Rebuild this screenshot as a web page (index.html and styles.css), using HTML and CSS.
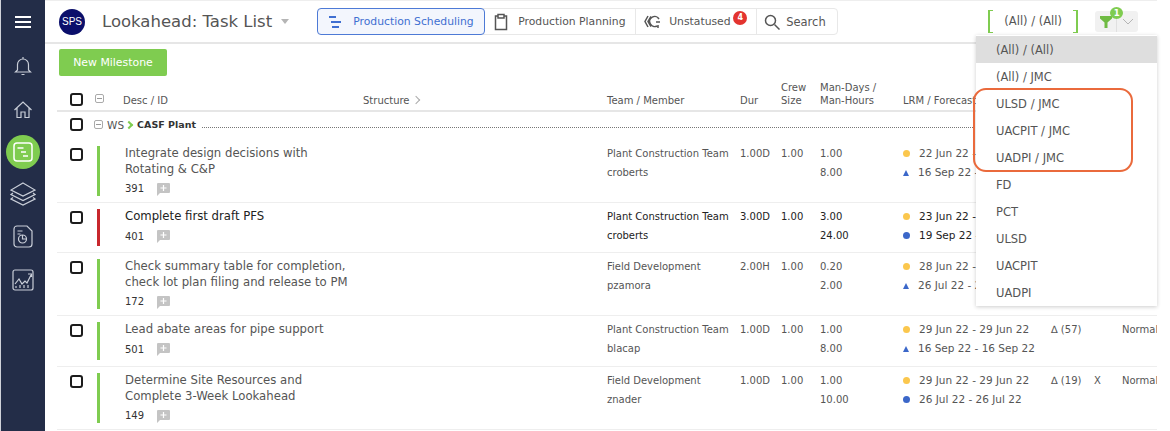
FILE: index.html
```html
<!DOCTYPE html>
<html lang="en">
<head>
    <meta charset="UTF-8">
    <title>Lookahead: Task List</title>
    <link rel="stylesheet" href="styles.css">
</head>
<body>
    <aside class="sidebar">
        <svg class="nav-icon menu" width="18" height="14" viewBox="0 0 18 14"><path d="M1 2h16M1 7h16M1 12h16" /></svg>
        <svg class="nav-icon bell" width="18" height="20" viewBox="0 0 18 20"><path d="M9 1v2M3.500 14V8.500a5.500 5.500 0 0 1 11 0V14l2 2h-15zM7.500 18.500h3" /></svg>
        <svg class="nav-icon home" width="20" height="20" viewBox="0 0 20 20"><path d="M1.500 10 10 2l8.500 8M4 8v9.500h4V12h4v5.500h4V8" /></svg>
        <div class="nav-active">
            <svg width="22" height="22" viewBox="0 0 22 22"><rect x="2" y="2" width="18" height="18" rx="3" /><path d="M5.500 7h6M9 11h5M11 15h5" /></svg>
        </div>
        <svg class="nav-icon layers" width="26" height="26" viewBox="0 0 26 26"><path d="M13 2 25 9l-12 6L1 9zM3 12l-2 1.500 12 6 12-6-2-1.500M3 16.500 1 18l12 6 12-6-2-1.500" /></svg>
        <svg class="nav-icon report" width="22" height="24" viewBox="0 0 22 24"><path d="M2 5a3 3 0 0 1 3-3h10l5 5v13a3 3 0 0 1-3 3H5a3 3 0 0 1-3-3zM5.500 7h5M5.500 10h3" /><circle cx="10.500" cy="15" r="4" /><path d="M10.500 11v4h4" /></svg>
        <svg class="nav-icon chart" width="22" height="22" viewBox="0 0 22 22"><rect x="1" y="1" width="20" height="20" rx="2" /><path d="M3 15l4-5 3 5 3-3 2 2 4-8M16 5h3.500v3M4 19v-2M8 19v-3M12 19v-3M16 19v-3" /></svg>
    </aside>

    <main class="content">
        <header class="topbar">
            <div class="logo">SPS</div>
            <h1 class="title">Lookahead: Task List</h1>
            <span class="title-caret"></span>
            <nav class="tabs">
                <a class="tab tab-active">
                    <svg width="16" height="14" viewBox="0 0 16 14"><path d="M1 2h7M3 7h10M4 12h7" /></svg>
                    Production Scheduling
                </a>
                <a class="tab tab-planning">
                    <svg width="14" height="18" viewBox="0 0 14 18"><path d="M4 3H1.500v13.500h11V3H10M4 1.500h6V5H4z" /></svg>
                    Production Planning
                </a>
                <a class="tab tab-unstatused">
                    <svg width="18" height="16" viewBox="0 0 18 16"><path d="M5 2 2 7.500 5 13M8 2.500 5 7.500 8 12.500M16 5a5 5 0 1 0-2 7M13 8h4M15 11v3" /></svg>
                    Unstatused
                    <span class="tab-badge">4</span>
                </a>
                <a class="tab tab-search">
                    <svg width="16" height="16" viewBox="0 0 16 16"><circle cx="6.500" cy="6.500" r="5" /><path d="m10.500 10.500 5 5" /></svg>
                    Search
                </a>
            </nav>
            <div class="scope-select">(All) / (All)</div>
            <div class="filter-btn">
                <span class="filter-main">
                    <svg width="12" height="12" viewBox="0 0 12 12"><path d="M0 0h12v2.500L7.500 6.500V12h-3V6.500L0 2.500z" /></svg>
                    <span class="filter-badge">1</span>
                </span>
                <span class="filter-more">
                    <svg width="12" height="7" viewBox="0 0 12 7"><path d="m1 1 5 5 5-5" /></svg>
                </span>
            </div>
        </header>

        <div class="actions">
            <button class="new-btn">New Milestone</button>
        </div>

        <div class="row head-row">
            <span class="check"></span>
            <span class="collapse"></span>
            <span>Desc / ID</span>
            <span>Structure <i class="chev"></i></span>
            <span>Team / Member</span>
            <span>Dur</span>
            <span>Crew<br>Size</span>
            <span>Man-Days /<br>Man-Hours</span>
            <span>LRM / Forecast</span>
        </div>

        <div class="ws-row">
            <span class="check"></span>
            <span class="collapse"></span>
            <span class="ws-label">WS</span>
            <i class="ws-chev"></i>
            <b class="ws-name">CASF Plant</b>
            <span class="ws-line"></span>
        </div>

        <div class="row task task-first">
            <span class="check"></span>
            <span class="bar"></span>
            <div class="desc">
                <p>Integrate design decisions with<br>Rotating &amp; C&amp;P</p>
                <div class="task-id">391 <svg class="note" width="13" height="13" viewBox="0 0 13 13"><path d="M0 1a1 1 0 0 1 1-1h11a1 1 0 0 1 1 1v8a1 1 0 0 1-1 1H3l-3 3z" /><path class="plus" d="M3.500 5h6M6.500 2v6" /></svg></div>
            </div>
            <span></span>
            <span class="cell-text">Plant Construction Team<br>croberts</span>
            <span>1.00D</span>
            <span>1.00</span>
            <span>1.00<br>8.00</span>
            <div class="dates">
                <div><i class="dot"></i>22 Jun 22 - 22 Jun 22</div>
                <div><i class="tri"></i>16 Sep 22 - 16 Sep 22</div>
            </div>
        </div>

        <div class="row task task-short task-dark">
            <span class="check"></span>
            <span class="bar bar-red"></span>
            <div class="desc">
                <p>Complete first draft PFS</p>
                <div class="task-id">401 <svg class="note" width="13" height="13" viewBox="0 0 13 13"><path d="M0 1a1 1 0 0 1 1-1h11a1 1 0 0 1 1 1v8a1 1 0 0 1-1 1H3l-3 3z" /><path class="plus" d="M3.500 5h6M6.500 2v6" /></svg></div>
            </div>
            <span></span>
            <span class="cell-text">Plant Construction Team<br>croberts</span>
            <span>3.00D</span>
            <span>1.00</span>
            <span>3.00<br>24.00</span>
            <div class="dates">
                <div><i class="dot"></i>23 Jun 22 - 23 Jun 22</div>
                <div><i class="blue-dot"></i>19 Sep 22 - 19 Sep 22</div>
            </div>
        </div>

        <div class="row task">
            <span class="check"></span>
            <span class="bar"></span>
            <div class="desc">
                <p>Check summary table for completion,<br>check lot plan filing and release to PM</p>
                <div class="task-id">172 <svg class="note" width="13" height="13" viewBox="0 0 13 13"><path d="M0 1a1 1 0 0 1 1-1h11a1 1 0 0 1 1 1v8a1 1 0 0 1-1 1H3l-3 3z" /><path class="plus" d="M3.500 5h6M6.500 2v6" /></svg></div>
            </div>
            <span></span>
            <span class="cell-text">Field Development<br>pzamora</span>
            <span>2.00H</span>
            <span>1.00</span>
            <span>0.20<br>2.00</span>
            <div class="dates">
                <div><i class="dot"></i>28 Jun 22 - 28 Jun 22</div>
                <div><i class="tri"></i>26 Jul 22 - 26 Jul 22</div>
            </div>
        </div>

        <div class="row task task-short task-plain">
            <span class="check"></span>
            <span class="bar"></span>
            <div class="desc">
                <p>Lead abate areas for pipe support</p>
                <div class="task-id">501 <svg class="note" width="13" height="13" viewBox="0 0 13 13"><path d="M0 1a1 1 0 0 1 1-1h11a1 1 0 0 1 1 1v8a1 1 0 0 1-1 1H3l-3 3z" /><path class="plus" d="M3.500 5h6M6.500 2v6" /></svg></div>
            </div>
            <span></span>
            <span class="cell-text">Plant Construction Team<br>blacap</span>
            <span>1.00D</span>
            <span>1.00</span>
            <span>1.00<br>8.00</span>
            <div class="dates">
                <div><i class="dot"></i>29 Jun 22 - 29 Jun 22</div>
                <div><i class="tri"></i>16 Sep 22 - 16 Sep 22</div>
            </div>
            <span>&#8710; (57)</span>
            <span></span>
            <span class="clip">Normal</span>
        </div>

        <div class="row task">
            <span class="check"></span>
            <span class="bar"></span>
            <div class="desc">
                <p>Determine Site Resources and<br>Complete 3-Week Lookahead</p>
                <div class="task-id">149 <svg class="note" width="13" height="13" viewBox="0 0 13 13"><path d="M0 1a1 1 0 0 1 1-1h11a1 1 0 0 1 1 1v8a1 1 0 0 1-1 1H3l-3 3z" /><path class="plus" d="M3.500 5h6M6.500 2v6" /></svg></div>
            </div>
            <span></span>
            <span class="cell-text">Field Development<br>znader</span>
            <span>1.00D</span>
            <span>1.00</span>
            <span>1.00<br>10.00</span>
            <div class="dates">
                <div><i class="dot"></i>29 Jun 22 - 29 Jun 22</div>
                <div><i class="blue-dot"></i>26 Jul 22 - 26 Jul 22</div>
            </div>
            <span>&#8710; (19)</span>
            <span>X</span>
            <span class="clip">Normal</span>
        </div>

        <ul class="dropdown">
            <li class="selected">(All) / (All)</li>
            <li>(All) / JMC</li>
            <li>ULSD / JMC</li>
            <li>UACPIT / JMC</li>
            <li>UADPI / JMC</li>
            <li>FD</li>
            <li>PCT</li>
            <li>ULSD</li>
            <li>UACPIT</li>
            <li>UADPI</li>
        </ul>
        <div class="callout"></div>
    </main>
</body>
</html>
```

FILE: styles.css
```css
* {
    box-sizing: border-box;
}

body {
    margin: 0;
    height: 431px;
    overflow: hidden;
    display: flex;
    background: #ffffff;
    font-family: "DejaVu Sans", Verdana, sans-serif;
    font-size: 10.5px;
    color: #555;
}

/* left nav */
.sidebar {
    width: 45px;
    height: 431px;
    flex: none;
    display: flex;
    flex-direction: column;
    align-items: center;
    background: #232d48;
    border-left: 1px solid #cfd2d9;
    padding-top: 15px;
}

.sidebar svg {
    fill: none;
    stroke: #c9ced8;
    stroke-width: 1.2;
}

.nav-icon.menu {
    stroke: #ffffff;
    stroke-width: 1.8;
}

.nav-icon.bell {
    margin-top: 27px;
}

.nav-icon.home {
    margin-top: 24px;
}

.nav-active {
    width: 34px;
    height: 34px;
    margin-top: 15px;
    border-radius: 50%;
    background: #7fcc50;
    display: flex;
    align-items: center;
    justify-content: center;
}

.nav-active svg {
    stroke: #ffffff;
    stroke-width: 1.5;
}

.nav-icon.layers {
    margin-top: 12px;
}

.nav-icon.report {
    margin-top: 17px;
}

.nav-icon.chart {
    margin-top: 21px;
}

/* main column */
.content {
    width: 1112px;
    flex: none;
    position: relative;
}

.topbar {
    height: 44px;
    display: flex;
    align-items: center;
    border-top: 1px solid #eeeeee;
    border-bottom: 2px solid #e6e6e6;
    padding-left: 14px;
}

.logo {
    width: 26px;
    height: 26px;
    border-radius: 50%;
    background: #0b0f6b;
    color: #ffffff;
    font-family: "Liberation Sans", Arial, sans-serif;
    font-size: 10px;
    line-height: 26px;
    text-align: center;
}

.title {
    margin: 0 0 0 17px;
    font-size: 16.5px;
    font-weight: normal;
    color: #555;
}

.title-caret {
    width: 0;
    height: 0;
    margin-left: 9px;
    border: 4.5px solid transparent;
    border-top: 5px solid #b5b5b5;
    border-bottom: 0;
}

.tabs {
    display: flex;
    height: 27px;
    margin-left: 28px;
    border: 1px solid #e8e8e8;
    border-radius: 4px;
}

.tab {
    display: flex;
    align-items: center;
    position: relative;
    border-right: 1px solid #e8e8e8;
    font-size: 10.8px;
    color: #555;
}

.tab svg {
    fill: none;
    stroke: #555;
    stroke-width: 1.5;
    flex: none;
}

.tab-active {
    width: 168px;
    margin: -1px 0 -1px -1px;
    padding-left: 10px;
    gap: 9px;
    color: #3f6fd1;
    background: #f3f6fd;
    border: 1.5px solid #4d7ad6;
    border-radius: 4px;
}

.tab-active svg {
    stroke: #3f6fd1;
    stroke-width: 2;
}

.tab-planning {
    width: 151px;
    padding-left: 9px;
    gap: 10px;
}

.tab-unstatused {
    width: 121px;
    padding-left: 7px;
    gap: 8px;
}

.tab-search {
    width: 80px;
    padding-left: 7px;
    gap: 6px;
    border-right: 0;
    font-size: 11.5px;
}

.tab-badge {
    position: absolute;
    top: 2px;
    left: 97px;
    width: 14px;
    height: 14px;
    border-radius: 50%;
    background: #e3342f;
    color: #ffffff;
    font-size: 8px;
    font-weight: bold;
    line-height: 14px;
    text-align: center;
}

.scope-select {
    width: 90px;
    height: 23px;
    margin-left: 150px;
    border-left: 2px solid #7fcc50;
    border-right: 2px solid #7fcc50;
    position: relative;
    font-size: 11.5px;
    line-height: 23px;
    text-align: center;
    color: #555;
}

.scope-select::before,
.scope-select::after {
    content: "";
    position: absolute;
    top: 0;
    bottom: 0;
    width: 3px;
    border-top: 1px solid #7fcc50;
    border-bottom: 1px solid #7fcc50;
}

.scope-select::before {
    left: 0;
}

.scope-select::after {
    right: 0;
}

.filter-btn {
    display: flex;
    width: 43px;
    height: 21px;
    margin-left: 17px;
    background: #f1f1f1;
    border-radius: 3px;
}

.filter-main {
    width: 22px;
    position: relative;
    border-right: 1px solid #e0e0e0;
    display: flex;
    align-items: center;
    justify-content: center;
}

.filter-main svg {
    fill: #6fbb43;
}

.filter-badge {
    position: absolute;
    top: -4px;
    left: 15px;
    width: 13px;
    height: 12px;
    border-radius: 50%;
    background: #7fcc50;
    color: #ffffff;
    font-size: 8.5px;
    font-weight: bold;
    line-height: 12px;
    text-align: center;
}

.filter-more {
    flex: 1;
    display: flex;
    align-items: center;
    justify-content: center;
}

.filter-more svg {
    fill: none;
    stroke: #b5b5b5;
}

.actions {
    height: 31px;
    padding: 5px 0 0 14px;
}

.new-btn {
    width: 108px;
    height: 27px;
    padding: 0;
    border: 0;
    border-radius: 2px;
    background: #7fcc50;
    color: #ffffff;
    font-family: inherit;
    font-size: 10.9px;
}

/* task table */
.row {
    display: grid;
    grid-template-columns: 25px 30px 238px 244px 133px 41px 39px 83px 148px 43px 28px 35px;
    width: 1100px;
    margin-left: 12px;
    padding-left: 13px;
    border-bottom: 1px solid #eeeeee;
    white-space: nowrap;
}

.head-row {
    grid-template-columns: 25px 28px 240px 244px 133px 41px 39px 83px 148px;
    height: 37px;
    align-items: end;
    line-height: 12.5px;
    padding-bottom: 3px;
    border-bottom: 2px solid #e6e6e6;
    font-size: 10px;
}

.check {
    display: block;
    width: 13px;
    height: 13px;
    border: 2px solid #1c1c1c;
    border-radius: 3px;
    background: #fff;
}

.head-row .check {
    margin-bottom: 1px;
}

.collapse {
    display: block;
    width: 9px;
    height: 9px;
    border: 1px solid #aaaaaa;
    border-radius: 2px;
    position: relative;
}

.collapse::after {
    content: "";
    position: absolute;
    left: 1px;
    right: 1px;
    top: 3px;
    height: 1px;
    background: #999;
}

.head-row .collapse {
    margin-bottom: 4px;
}

.chev {
    display: inline-block;
    width: 6px;
    height: 6px;
    margin-bottom: 1px;
    border-top: 1px solid #aaa;
    border-right: 1px solid #aaa;
    transform: rotate(45deg);
}

.ws-row {
    height: 25px;
    display: flex;
    align-items: center;
    margin-left: 12px;
    padding-left: 13px;
    width: 1100px;
}

.ws-row .collapse {
    margin-left: 11px;
}

.ws-label {
    margin-left: 4px;
}

.ws-chev {
    width: 6px;
    height: 6px;
    margin-left: 2px;
    border-top: 2px solid #7fcc50;
    border-right: 2px solid #7fcc50;
    transform: rotate(45deg);
}

.ws-name {
    margin-left: 5px;
    font-size: 9.5px;
    color: #333;
}

.ws-line {
    flex: 1;
    margin: 5px 0 0 6px;
    border-top: 1px dotted #777;
}

.task {
    height: 63px;
    padding-top: 6px;
}

.task-first {
    height: 66px;
    padding-top: 9px;
}

.task-short {
    height: 50px;
}

.task-plain {
    height: 51px;
}

.task > .check {
    margin-top: 2px;
}

.task-dark {
    color: #222;
}

.task > span:not(.check):not(.bar),
.dates {
    margin-top: -2px;
    font-size: 10px;
    line-height: 19px;
}

.task > .cell-text {
    font-size: 9.8px;
}

.bar {
    display: block;
    width: 3px;
    margin-left: 2px;
    height: calc(100% - 6px);
    background: #7fcc50;
}

.bar-red {
    background: #c8282d;
}

.desc p {
    margin: 0;
    font-size: 11.7px;
    line-height: 15.5px;
}

.task-id {
    display: flex;
    align-items: center;
    gap: 13px;
    margin-top: 5px;
    font-size: 10px;
    color: #333;
    line-height: 14px;
}

.note {
    fill: #c4c4c4;
}

.note .plus {
    fill: none;
    stroke: #ffffff;
    stroke-width: 1.2;
}

.dates {
    font-size: 10.5px;
}

.dates div {
    display: flex;
    align-items: center;
}

.dates i {
    flex: none;
    margin-right: 9px;
}

.dot,
.blue-dot {
    width: 7px;
    height: 7px;
    border-radius: 50%;
    background: #fbc74d;
}

.blue-dot {
    background: #3b67c9;
}

.tri {
    width: 0;
    height: 0;
    border-left: 3.5px solid transparent;
    border-right: 3.5px solid transparent;
    border-bottom: 6px solid #3b67c9;
}

.clip {
    overflow: hidden;
}

/* scope dropdown, open over the table */
.dropdown {
    position: absolute;
    top: 35px;
    left: 931px;
    width: 181px;
    height: 271px;
    margin: 0;
    padding: 1px 0 0;
    list-style: none;
    background: #ffffff;
    box-shadow: 0 1px 4px rgba(0, 0, 0, 0.2);
    font-size: 11.5px;
    color: #555;
}

.dropdown li {
    height: 27px;
    line-height: 28px;
    padding-left: 20px;
}

.dropdown .selected {
    background: #dedede;
}

.callout {
    position: absolute;
    top: 88px;
    left: 928px;
    width: 160px;
    height: 84px;
    border: 2px solid #ea6a3c;
    border-radius: 13px;
}
```
